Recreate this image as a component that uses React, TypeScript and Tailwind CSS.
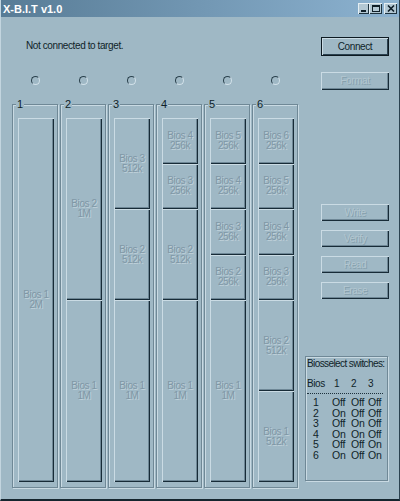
import React from "react";

type Bios = { name: string; size: string; units: 1 | 2 | 4 | 8 };

const grow = {
  1: "flex-[1_1_0%]",
  2: "flex-[2_2_0%]",
  4: "flex-[4_4_0%]",
  8: "flex-[8_8_0%]",
};

const columns: Bios[][] = [
  [{ name: "Bios 1", size: "2M", units: 8 }],
  [
    { name: "Bios 2", size: "1M", units: 4 },
    { name: "Bios 1", size: "1M", units: 4 },
  ],
  [
    { name: "Bios 3", size: "512k", units: 2 },
    { name: "Bios 2", size: "512k", units: 2 },
    { name: "Bios 1", size: "1M", units: 4 },
  ],
  [
    { name: "Bios 4", size: "256k", units: 1 },
    { name: "Bios 3", size: "256k", units: 1 },
    { name: "Bios 2", size: "512k", units: 2 },
    { name: "Bios 1", size: "1M", units: 4 },
  ],
  [
    { name: "Bios 5", size: "256k", units: 1 },
    { name: "Bios 4", size: "256k", units: 1 },
    { name: "Bios 3", size: "256k", units: 1 },
    { name: "Bios 2", size: "256k", units: 1 },
    { name: "Bios 1", size: "1M", units: 4 },
  ],
  [
    { name: "Bios 6", size: "256k", units: 1 },
    { name: "Bios 5", size: "256k", units: 1 },
    { name: "Bios 4", size: "256k", units: 1 },
    { name: "Bios 3", size: "256k", units: 1 },
    { name: "Bios 2", size: "512k", units: 2 },
    { name: "Bios 1", size: "512k", units: 2 },
  ],
];

const switches = [
  ["1", "Off", "Off", "Off"],
  ["2", "On", "Off", "Off"],
  ["3", "Off", "On", "Off"],
  ["4", "On", "On", "Off"],
  ["5", "Off", "Off", "On"],
  ["6", "On", "Off", "On"],
];

const bevel =
  "shadow-[inset_1px_1px_0_#cadbe4,inset_-1px_-1px_0_#172b37,inset_-2px_-2px_0_#6e8796]";

function Btn({ label, h, disabled }: { label: string; h: string; disabled?: boolean }) {
  return (
    <div
      className={`${h} flex w-[68px] items-center justify-center self-end ${bevel} ${
        disabled
          ? "text-[#b2c6d0] [text-shadow:1px_1px_0_#86a0ad]"
          : "text-[#0f1f29]"
      }`}
    >
      {label}
    </div>
  );
}

function TitleButton({ children, w }: { children: React.ReactNode; w: string }) {
  return (
    <div
      className={`${w} flex h-[11px] items-center justify-center bg-[#b3c8d4] shadow-[inset_1px_1px_0_#e4eef3,inset_-1px_-1px_0_#1f3440]`}
    >
      {children}
    </div>
  );
}

export default function App() {
  return (
    <div className="flex h-[501px] w-[400px] flex-col border-b-2 border-l border-r border-b-[#15262f] border-l-[#c3d5df] border-r-[#2b4250] bg-[#9fb8c5] font-['Liberation_Sans',Arial,sans-serif] text-[10px] leading-[12px] tracking-[-0.4px] text-[#0f1f29]">
      {/* title bar */}
      <div className="flex h-[17px] shrink-0 items-center justify-between bg-gradient-to-r from-[#587c96] to-[#8db3d1] pl-[2px] pr-[2px]">
        <span className="text-[11px] font-bold tracking-normal text-white">X-B.I.T v1.0</span>
        <div className="flex items-center">
          <TitleButton w="w-[11px]">
            <div className="mt-[5px] h-[2px] w-[5px] bg-[#0f1f29]" />
          </TitleButton>
          <TitleButton w="w-[13px]">
            <div className="h-[7px] w-[8px] border border-t-2 border-[#0f1f29]" />
          </TitleButton>
          <div className="w-[2px]" />
          <TitleButton w="w-[13px]">
            <svg width="8" height="7" viewBox="0 0 8 7">
              <path d="M1 0.5 L7 6.5 M7 0.5 L1 6.5" stroke="#0f1f29" strokeWidth="1.6" />
            </svg>
          </TitleButton>
        </div>
      </div>

      <div className="flex flex-1">
        {/* left area */}
        <div className="ml-[11px] flex w-[286px] flex-col">
          <div className="mt-[23px] pl-[14px]">Not connected to target.</div>

          <div className="mt-[24px] grid grid-cols-6 gap-[2px]">
            {columns.map((_, i) => (
              <div key={i} className="flex justify-center">
                <div className="h-[9px] w-[9px] rounded-full border border-b-[#d2e1e9] border-l-[#2a404c] border-r-[#d2e1e9] border-t-[#2a404c]" />
              </div>
            ))}
          </div>

          <div className="mt-[19px] grid grid-cols-6 gap-[2px]">
            {columns.map((col, i) => (
              <div
                key={i}
                className="relative h-[384px] border border-[#6f8896] shadow-[inset_1px_1px_0_#c9dae3,1px_1px_0_#c9dae3]"
              >
                <span className="absolute left-[3px] top-[-7px] bg-[#9fb8c5] px-[1px] text-[11px] tracking-normal">
                  {i + 1}
                </span>
                <div className="ml-[5px] mt-[13px] flex h-[364px] w-[36px] flex-col">
                  {col.map((b, j) => (
                    <div
                      key={j}
                      className={`${grow[b.units]} flex flex-col items-center justify-center leading-[10px] text-[#7f97a5] [text-shadow:1px_1px_0_#bfd1da] ${bevel}`}
                    >
                      <span>{b.name}</span>
                      <span>{b.size}</span>
                    </div>
                  ))}
                </div>
              </div>
            ))}
          </div>
        </div>

        {/* right area */}
        <div className="ml-[7px] flex w-[84px] flex-col">
          <div className="mt-[20px] flex h-[19px] w-[68px] items-center justify-center self-end border border-[#0d1a22] shadow-[inset_1px_1px_0_#cadbe4,inset_-1px_-1px_0_#2a4150]">
            Connect
          </div>
          <div className="mt-[16px] flex flex-col">
            <Btn label="Format" h="h-[18px]" disabled />
          </div>
          <div className="mt-[114px] flex flex-col gap-[9px]">
            <Btn label="Write" h="h-[17px]" disabled />
            <Btn label="Verify" h="h-[17px]" disabled />
            <Btn label="Read" h="h-[17px]" disabled />
            <Btn label="Erase" h="h-[17px]" disabled />
          </div>

          <div className="mt-[57px] h-[125px] w-[83px] border border-[#6f8896] shadow-[inset_1px_1px_0_#c9dae3,1px_1px_0_#c9dae3]">
            <div className="whitespace-nowrap pl-[1px] pt-[1px] tracking-[-0.6px]">Biosselect switches:</div>
            <div className="mt-[8px] flex">
              <span className="w-[28px] pl-[1px]">Bios</span>
              <span className="w-[17px]">1</span>
              <span className="w-[17px]">2</span>
              <span>3</span>
            </div>
            <div className="mx-[1px] mt-[3px] w-[76px] border-t border-dotted border-[#1d313c]" />
            <div className="mt-[3px] flex flex-col text-[10.5px] leading-[10.6px] tracking-[-0.2px]">
              {switches.map((r) => (
                <div key={r[0]} className="flex">
                  <span className="w-[26px] pl-[7px]">{r[0]}</span>
                  <span className="w-[19px]">{r[1]}</span>
                  <span className="w-[17px]">{r[2]}</span>
                  <span>{r[3]}</span>
                </div>
              ))}
            </div>
          </div>
        </div>
      </div>
    </div>
  );
}
